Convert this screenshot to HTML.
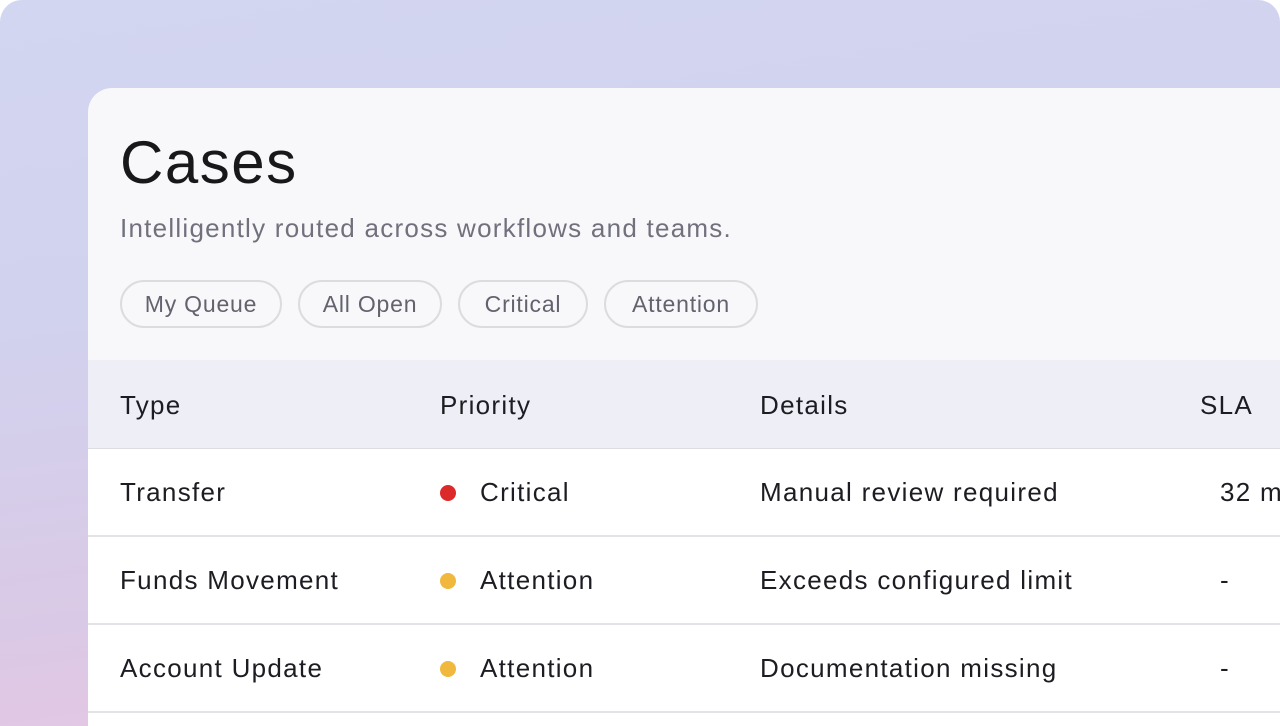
<!DOCTYPE html>
<html><head><style>
*{margin:0;padding:0;box-sizing:border-box}
html,body{width:1280px;height:726px;overflow:hidden;background:#fff;font-family:"Liberation Sans",sans-serif}
.bg{position:absolute;left:0;top:0;width:1280px;height:726px;border-radius:22px 22px 0 0;background:linear-gradient(172deg,#d3d6f1 0%,#d1d2ee 35%,#dac9e6 70%,#eec5df 100%)}
.card{position:absolute;left:88px;top:88px;width:1192px;height:638px;border-radius:24px 0 0 0;background:#f8f8fa;overflow:hidden}
h1{position:absolute;left:32px;top:40px;font-size:60px;font-weight:400;color:#18181b;letter-spacing:1.5px}
.sub{position:absolute;left:32px;top:125px;font-size:26px;color:#71717e;letter-spacing:1.25px}
.pill{position:absolute;top:192px;height:48px;border:2px solid #dcdce0;border-radius:24px;font-size:23px;color:#63636f;line-height:44px;text-align:center;letter-spacing:0.8px}
.th{position:absolute;left:0;top:272px;width:1192px;height:89px;background:#eeeef6;border-bottom:1px solid #dcdce3}
.row{position:absolute;left:0;width:1192px;height:88px;background:#fff;border-bottom:2px solid #e2e2e7}
.c{position:absolute;font-size:26px;color:#1c1c22;top:28px;letter-spacing:1.3px;white-space:nowrap}
.th .c{top:30px}
.dot{position:absolute;left:352px;top:36px;width:16px;height:16px;border-radius:50%}
</style></head><body>
<div class="bg"></div>
<div class="card">
<h1>Cases</h1>
<div class="sub">Intelligently routed across workflows and teams.</div>
<div class="pill" style="left:32px;width:162px">My Queue</div>
<div class="pill" style="left:210px;width:144px">All Open</div>
<div class="pill" style="left:370px;width:130px">Critical</div>
<div class="pill" style="left:516px;width:154px">Attention</div>
<div class="th"><span class="c" style="left:32px">Type</span><span class="c" style="left:352px">Priority</span><span class="c" style="left:672px">Details</span><span class="c" style="left:1112px">SLA</span></div>
<div class="row" style="top:361px"><span class="c" style="left:32px">Transfer</span><span class="dot" style="background:#dc2a2a"></span><span class="c" style="left:392px">Critical</span><span class="c" style="left:672px">Manual review required</span><span class="c" style="left:1132px">32 m</span></div>
<div class="row" style="top:449px"><span class="c" style="left:32px">Funds Movement</span><span class="dot" style="background:#f0b83c"></span><span class="c" style="left:392px">Attention</span><span class="c" style="left:672px">Exceeds configured limit</span><span class="c" style="left:1132px">-</span></div>
<div class="row" style="top:537px"><span class="c" style="left:32px">Account Update</span><span class="dot" style="background:#f0b83c"></span><span class="c" style="left:392px">Attention</span><span class="c" style="left:672px">Documentation missing</span><span class="c" style="left:1132px">-</span></div>
<div class="row" style="top:625px;height:13px;border-bottom:none"></div>
</div>
</body></html>
